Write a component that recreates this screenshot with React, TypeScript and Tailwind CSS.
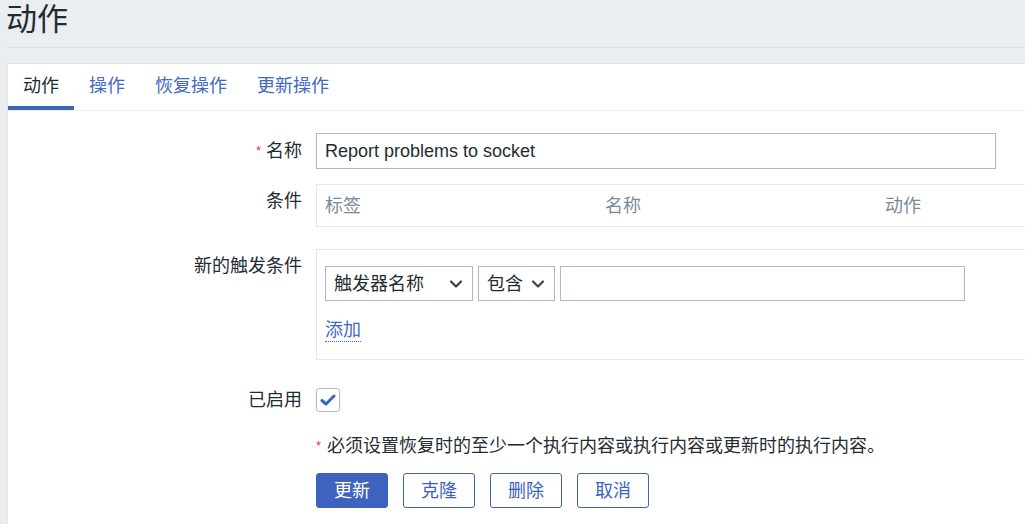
import { ChevronDown } from "lucide-react";

const font = "font-['Liberation_Sans','Noto_Sans_CJK_SC',sans-serif]";

const tabs = ["动作", "操作", "恢复操作", "更新操作"];

function Label({ text, required, className = "" }: { text: string; required?: boolean; className?: string }) {
  return (
    <div className={`w-[294px] shrink-0 text-right text-[#1f2c33] ${className}`}>
      {required && <span className="text-[#e33734] text-[13px] align-top mr-[5px]">*</span>}
      {text}
    </div>
  );
}

function Select({ value, width }: { value: string; width: string }) {
  return (
    <div
      className={`${width} h-[35px] border border-[#acbbc7] flex items-center justify-between pl-[8px] pr-[6px] text-[#1f2c33]`}
    >
      <span>{value}</span>
      <ChevronDown size={20} strokeWidth={2.6} className="text-[#3a444c]" />
    </div>
  );
}

export default function App() {
  return (
    <div className={`w-[1025px] h-[524px] overflow-hidden bg-[#ebeef0] ${font} text-[18px] leading-[26px]`}>
      {/* header */}
      <div className="ml-[6px] h-[48px] border-b border-[#dde1e4] flex items-start">
        <h1 className="text-[31px] leading-[40px] text-[#1f2c33]">动作</h1>
      </div>

      {/* panel */}
      <div className="ml-[7px] mt-[15px] w-[1040px] h-[500px] bg-white border border-[#dfe4e7]">
        {/* tabs */}
        <div className="flex h-[47px] border-b border-[#ebeef0]">
          {tabs.map((t, i) => (
            <div
              key={t}
              className={`px-[15px] flex items-center pt-[2px] border-b-[4px] ${
                i === 0 ? "border-[#3d63bf] text-[#1f2c33]" : "border-transparent text-[#4169c5]"
              }`}
            >
              {t}
            </div>
          ))}
        </div>

        {/* form */}
        <div className="pt-[22px]">
          {/* name */}
          <div className="flex items-center">
            <Label text="名称" required />
            <div className="ml-[14px] w-[680px] h-[36px] border border-[#acbbc7] flex items-center px-[8px] text-[#1f2c33]">
              Report problems to socket
            </div>
          </div>

          {/* conditions */}
          <div className="flex mt-[15px]">
            <Label text="条件" className="pt-[4px]" />
            <div className="ml-[14px] flex-1 h-[43px] border border-[#e6e9ec] flex items-center pl-[8px] text-[#7b8a97]">
              <div className="w-[280px] pt-[1px]">标签</div>
              <div className="w-[280px] pt-[1px]">名称</div>
              <div className="pt-[1px]">动作</div>
            </div>
          </div>

          {/* new condition */}
          <div className="flex mt-[22px]">
            <Label text="新的触发条件" className="pt-[4px]" />
            <div className="ml-[14px] flex-1 h-[111px] border border-[#e6e9ec] pl-[8px] pt-[16px]">
              <div className="flex gap-[5px]">
                <Select value="触发器名称" width="w-[148px]" />
                <Select value="包含" width="w-[77px]" />
                <div className="w-[405px] h-[35px] border border-[#acbbc7]" />
              </div>
              <div className="mt-[16px]">
                <span className="text-[#4169c5] border-b border-dotted border-[#4169c5] leading-[21px] inline-block">
                  添加
                </span>
              </div>
            </div>
          </div>

          {/* enabled */}
          <div className="flex items-center mt-[27px]">
            <Label text="已启用" />
            <div className="ml-[14px] w-[24px] h-[24px] border border-[#acbbc7] rounded-[3px] flex items-center justify-center">
              <svg width="16" height="14" viewBox="0 0 16 14" fill="none">
                <path d="M2 7.5 L6 11 L14 3" stroke="#3d63bf" strokeWidth="3" strokeLinecap="round" strokeLinejoin="round" />
              </svg>
            </div>
          </div>

          {/* note */}
          <div className="ml-[308px] mt-[20px] text-[#1f2c33]">
            <span className="text-[#e33734] text-[13px] align-top mr-[6px]">*</span>
            必须设置恢复时的至少一个执行内容或执行内容或更新时的执行内容。
          </div>

          {/* buttons */}
          <div className="ml-[308px] mt-[14px] flex gap-[15px]">
            <button className="w-[72px] h-[35px] rounded-[3px] bg-[#3d63bf] border border-[#3d63bf] text-white">
              更新
            </button>
            {["克隆", "删除", "取消"].map((b) => (
              <button
                key={b}
                className="w-[72px] h-[35px] rounded-[3px] bg-white border border-[#3d63bf] text-[#3d63bf]"
              >
                {b}
              </button>
            ))}
          </div>
        </div>
      </div>
    </div>
  );
}
